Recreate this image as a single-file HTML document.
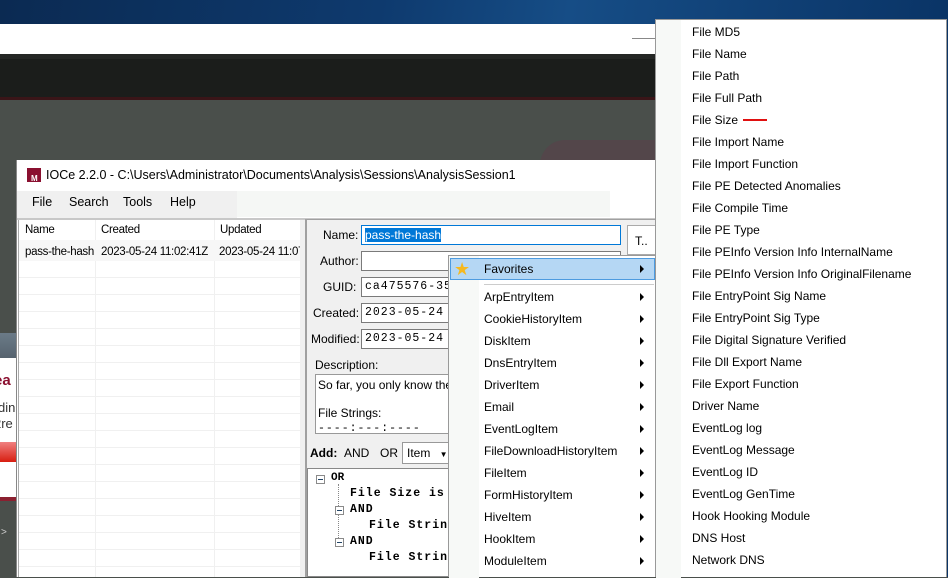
<!DOCTYPE html>
<html><head><meta charset="utf-8"><style>
*{margin:0;padding:0;box-sizing:border-box}
body{width:948px;height:577px;overflow:hidden;position:relative;font-family:"Liberation Sans",sans-serif;font-size:12px;color:#000;background:#4a4f4b}
.a{position:absolute}
.mono{font-family:"Liberation Mono",monospace;font-size:11.5px;letter-spacing:1px}
.row{position:absolute;left:0;right:0;height:1px;background:#f0f0f0}
.mi{position:absolute;left:35px;height:22px;line-height:22px;white-space:nowrap}
.ar{position:absolute;left:191px;width:0;height:0;border-top:4px solid transparent;border-bottom:4px solid transparent;border-left:4px solid #000}
.m2{position:absolute;left:36px;height:22px;line-height:22px;white-space:nowrap}
.box{position:absolute;background:#fff;border:1px solid #7a7a7a;height:20px;line-height:18px;padding-left:3px;overflow:hidden;white-space:nowrap}
.lt{font-size:11.5px;letter-spacing:-0.3px;white-space:nowrap}
</style></head><body>
<div class="a" style="left:0;top:0;width:948px;height:24px;background:linear-gradient(100deg,#0b2a52 0%,#0e3a6e 40%,#164d86 60%,#0a3466 100%)"></div>
<div class="a" style="left:0;top:24px;width:660px;height:30px;background:#fff"></div>
<div class="a" style="left:632px;top:38px;width:24px;height:1px;background:#888"></div>
<div class="a" style="left:0;top:54px;width:660px;height:45px;background:#1b1d1b"></div>
<div class="a" style="left:0;top:54px;width:660px;height:5px;background:#252725"></div>
<div class="a" style="left:0;top:97px;width:660px;height:3px;background:#3a1518"></div>
<div class="a" style="left:0;top:100px;width:660px;height:477px;background:#4a4f4b"></div>
<div class="a" style="left:540px;top:140px;width:120px;height:25px;background:#53464a;border-radius:80px 0 0 0"></div>
<!-- left clipped window -->
<div class="a" style="left:0;top:333px;width:16px;height:25px;background:linear-gradient(#6b7b88,#56636e)"></div>
<div class="a" style="left:0;top:358px;width:16px;height:143px;background:#fff;overflow:hidden">
 <div class="a" style="left:-6px;top:14px;color:#8b1030;font-weight:bold;font-size:15px">ea</div>
 <div class="a" style="left:-2px;top:42px;color:#333;font-size:13px">din</div>
 <div class="a" style="left:-6px;top:58px;color:#333;font-size:13px">2re</div>
 <div class="a" style="left:0;top:84px;width:16px;height:20px;background:linear-gradient(#f08080,#d81e10)"></div>
 <div class="a" style="left:0;top:139px;width:16px;height:4px;background:#8b2030"></div>
</div>
<div class="a" style="left:1px;top:527px;color:#ccc;font-size:10px">&gt;</div>
<!-- IOCe window -->
<div class="a" style="left:16px;top:160px;width:640px;height:417px;background:#fff;border-left:1px solid #888"></div>
<div class="a" style="left:27px;top:168px;width:14px;height:14px;background:#8a1030"></div>
<div class="a" style="left:31px;top:174px;color:#fff;font-size:8px;font-weight:bold">M</div>
<div class="a" style="left:46px;top:168px;font-size:12.5px">IOCe 2.2.0 - C:\Users\Administrator\Documents\Analysis\Sessions\AnalysisSession1</div>
<div class="a" style="left:17px;top:191px;width:220px;height:28px;background:#f0f0f0"></div>
<div class="a" style="left:237px;top:191px;width:373px;height:26px;background:#f5f7f5"></div>
<div class="a" style="left:32px;top:195px;font-size:12.5px">File</div>
<div class="a" style="left:69px;top:195px;font-size:12.5px">Search</div>
<div class="a" style="left:123px;top:195px;font-size:12.5px">Tools</div>
<div class="a" style="left:170px;top:195px;font-size:12.5px">Help</div>
<div class="a" style="left:17px;top:218px;width:640px;height:2px;background:#c8c8c8"></div>
<!-- list panel -->
<div class="a" style="left:18px;top:220px;width:282px;height:357px;background:#fff;border-left:1px solid #aaa;overflow:hidden">
 <div class="a" style="left:76px;top:0;width:1px;height:357px;background:#f0f0f0"></div>
 <div class="a" style="left:195px;top:0;width:1px;height:357px;background:#f0f0f0"></div>
 <div class="a" style="left:0;top:20px;width:282px;height:21px;background:#f7f7f7"></div>
 <div class="row" style="top:57px"></div><div class="row" style="top:74px"></div><div class="row" style="top:91px"></div><div class="row" style="top:108px"></div><div class="row" style="top:125px"></div><div class="row" style="top:142px"></div><div class="row" style="top:159px"></div><div class="row" style="top:176px"></div><div class="row" style="top:193px"></div><div class="row" style="top:210px"></div><div class="row" style="top:227px"></div><div class="row" style="top:244px"></div><div class="row" style="top:261px"></div><div class="row" style="top:278px"></div><div class="row" style="top:295px"></div><div class="row" style="top:312px"></div><div class="row" style="top:329px"></div><div class="row" style="top:346px"></div>
 <div class="a lt" style="left:6px;top:4px">Name</div>
 <div class="a lt" style="left:82px;top:4px">Created</div>
 <div class="a lt" style="left:201px;top:4px">Updated</div>
 <div class="a lt" style="left:6px;top:26px">pass-the-hash</div>
 <div class="a lt" style="left:82px;top:26px">2023-05-24 11:02:41Z</div>
 <div class="a lt" style="left:200px;top:26px">2023-05-24 11:07</div>
</div>
<div class="a" style="left:300px;top:220px;width:5px;height:357px;background:#f0f0f0"></div>
<!-- detail panel -->
<div class="a" style="left:305px;top:219px;width:350px;height:358px;background:#f0f0f0;border-left:2px solid #a0a0a0;border-top:1px solid #a0a0a0"></div>
<div class="a" style="left:323px;top:228px">Name:</div>
<div class="box" style="left:361px;top:225px;width:260px;border-color:#0078d7"><span style="background:#0078d7;color:#fff">pass-the-hash</span></div>
<div class="a" style="left:320px;top:254px">Author:</div>
<div class="box" style="left:361px;top:251px;width:260px"></div>
<div class="a" style="left:323px;top:280px">GUID:</div>
<div class="box mono" style="left:361px;top:277px;width:100px">ca475576-356</div>
<div class="a" style="left:313px;top:306px">Created:</div>
<div class="box mono" style="left:361px;top:303px;width:100px">2023-05-24 1</div>
<div class="a" style="left:311px;top:332px">Modified:</div>
<div class="box mono" style="left:361px;top:329px;width:100px">2023-05-24 1</div>
<div class="a" style="left:315px;top:358px">Description:</div>
<div class="a" style="left:315px;top:374px;width:140px;height:60px;background:#fff;border:1px solid #999;overflow:hidden;padding:3px 2px;white-space:nowrap">So far, you only know the fo<br><br>File Strings:<br><span class="mono">----:---:----</span></div>
<div class="a" style="left:627px;top:225px;width:29px;height:30px;background:#fff;border:1px solid #aaa;padding:8px 0 0 7px">T..</div>
<div class="a" style="left:310px;top:446px;font-weight:bold">Add:</div>
<div class="a" style="left:344px;top:446px">AND</div>
<div class="a" style="left:380px;top:446px">OR</div>
<div class="a" style="left:402px;top:442px;width:50px;height:22px;background:#fff;border:1px solid #999;padding:3px 0 0 4px">Item <span style="font-size:8px;margin-left:6px">▼</span></div>
<div class="a" style="left:307px;top:468px;width:150px;height:109px;background:#fff;border:1px solid #888"></div>
<div class="a" style="left:316px;top:475px;width:9px;height:9px;border:1px solid #8a8a8a;background:#fff"></div><div class="a" style="left:318px;top:479px;width:5px;height:1px;background:#246"></div>
<div class="a mono" style="left:331px;top:472px;font-weight:bold;font-size:11px;letter-spacing:0">OR</div>
<div class="a" style="left:338px;top:484px;width:1px;height:62px;border-left:1px dotted #888"></div>
<div class="a mono" style="left:350px;top:487px;font-weight:bold">File Size is 8</div>
<div class="a" style="left:335px;top:506px;width:9px;height:9px;border:1px solid #8a8a8a;background:#fff"></div><div class="a" style="left:337px;top:510px;width:5px;height:1px;background:#246"></div>
<div class="a mono" style="left:350px;top:503px;font-weight:bold">AND</div>
<div class="a mono" style="left:369px;top:519px;font-weight:bold">File String</div>
<div class="a" style="left:335px;top:538px;width:9px;height:9px;border:1px solid #8a8a8a;background:#fff"></div><div class="a" style="left:337px;top:542px;width:5px;height:1px;background:#246"></div>
<div class="a mono" style="left:350px;top:535px;font-weight:bold">AND</div>
<div class="a mono" style="left:369px;top:551px;font-weight:bold">File String</div>
<!-- menu 1 -->
<div class="a" style="left:448px;top:255px;width:208px;height:322px;background:#fff;border:1px solid #999;border-bottom:none">
 <div class="a" style="left:0;top:0;width:30px;height:322px;background:#f7f9f7"></div>
 <div class="a" style="left:1px;top:2px;width:205px;height:22px;background:#b5d7f4;border:1px solid #4d9be0"></div>
 <div class="a" style="left:5px;top:2px;font-size:18px;color:#f6b81e;line-height:22px">★</div>
 <div class="a" style="left:35px;top:28px;width:170px;height:1px;background:#ccc"></div>
 <div class="mi" style="top:2px">Favorites</div><div class="ar" style="top:9px"></div>
 <div class="mi" style="top:30px">ArpEntryItem</div><div class="ar" style="top:37px"></div>
 <div class="mi" style="top:52px">CookieHistoryItem</div><div class="ar" style="top:59px"></div>
 <div class="mi" style="top:74px">DiskItem</div><div class="ar" style="top:81px"></div>
 <div class="mi" style="top:96px">DnsEntryItem</div><div class="ar" style="top:103px"></div>
 <div class="mi" style="top:118px">DriverItem</div><div class="ar" style="top:125px"></div>
 <div class="mi" style="top:140px">Email</div><div class="ar" style="top:147px"></div>
 <div class="mi" style="top:162px">EventLogItem</div><div class="ar" style="top:169px"></div>
 <div class="mi" style="top:184px">FileDownloadHistoryItem</div><div class="ar" style="top:191px"></div>
 <div class="mi" style="top:206px">FileItem</div><div class="ar" style="top:213px"></div>
 <div class="mi" style="top:228px">FormHistoryItem</div><div class="ar" style="top:235px"></div>
 <div class="mi" style="top:250px">HiveItem</div><div class="ar" style="top:257px"></div>
 <div class="mi" style="top:272px">HookItem</div><div class="ar" style="top:279px"></div>
 <div class="mi" style="top:294px">ModuleItem</div><div class="ar" style="top:301px"></div>
</div>
<!-- menu 2 -->
<div class="a" style="left:655px;top:19px;width:292px;height:558px;background:#fff;border:1px solid #999;border-bottom:none">
 <div class="a" style="left:0;top:0;width:25px;height:558px;background:#f7f9f7"></div>
 <div class="m2" style="top:1px">File MD5</div>
 <div class="m2" style="top:23px">File Name</div>
 <div class="m2" style="top:45px">File Path</div>
 <div class="m2" style="top:67px">File Full Path</div>
 <div class="m2" style="top:89px">File Size</div>
 <div class="a" style="left:87px;top:99px;width:24px;height:2px;background:#e01010"></div>
 <div class="m2" style="top:111px">File Import Name</div>
 <div class="m2" style="top:133px">File Import Function</div>
 <div class="m2" style="top:155px">File PE Detected Anomalies</div>
 <div class="m2" style="top:177px">File Compile Time</div>
 <div class="m2" style="top:199px">File PE Type</div>
 <div class="m2" style="top:221px">File PEInfo Version Info InternalName</div>
 <div class="m2" style="top:243px">File PEInfo Version Info OriginalFilename</div>
 <div class="m2" style="top:265px">File EntryPoint Sig Name</div>
 <div class="m2" style="top:287px">File EntryPoint Sig Type</div>
 <div class="m2" style="top:309px">File Digital Signature Verified</div>
 <div class="m2" style="top:331px">File Dll Export Name</div>
 <div class="m2" style="top:353px">File Export Function</div>
 <div class="m2" style="top:375px">Driver Name</div>
 <div class="m2" style="top:397px">EventLog log</div>
 <div class="m2" style="top:419px">EventLog Message</div>
 <div class="m2" style="top:441px">EventLog ID</div>
 <div class="m2" style="top:463px">EventLog GenTime</div>
 <div class="m2" style="top:485px">Hook Hooking Module</div>
 <div class="m2" style="top:507px">DNS Host</div>
 <div class="m2" style="top:529px">Network DNS</div>
</div>
<div class="a" style="left:947px;top:0;width:1px;height:577px;background:#0a3466"></div>
</body></html>
